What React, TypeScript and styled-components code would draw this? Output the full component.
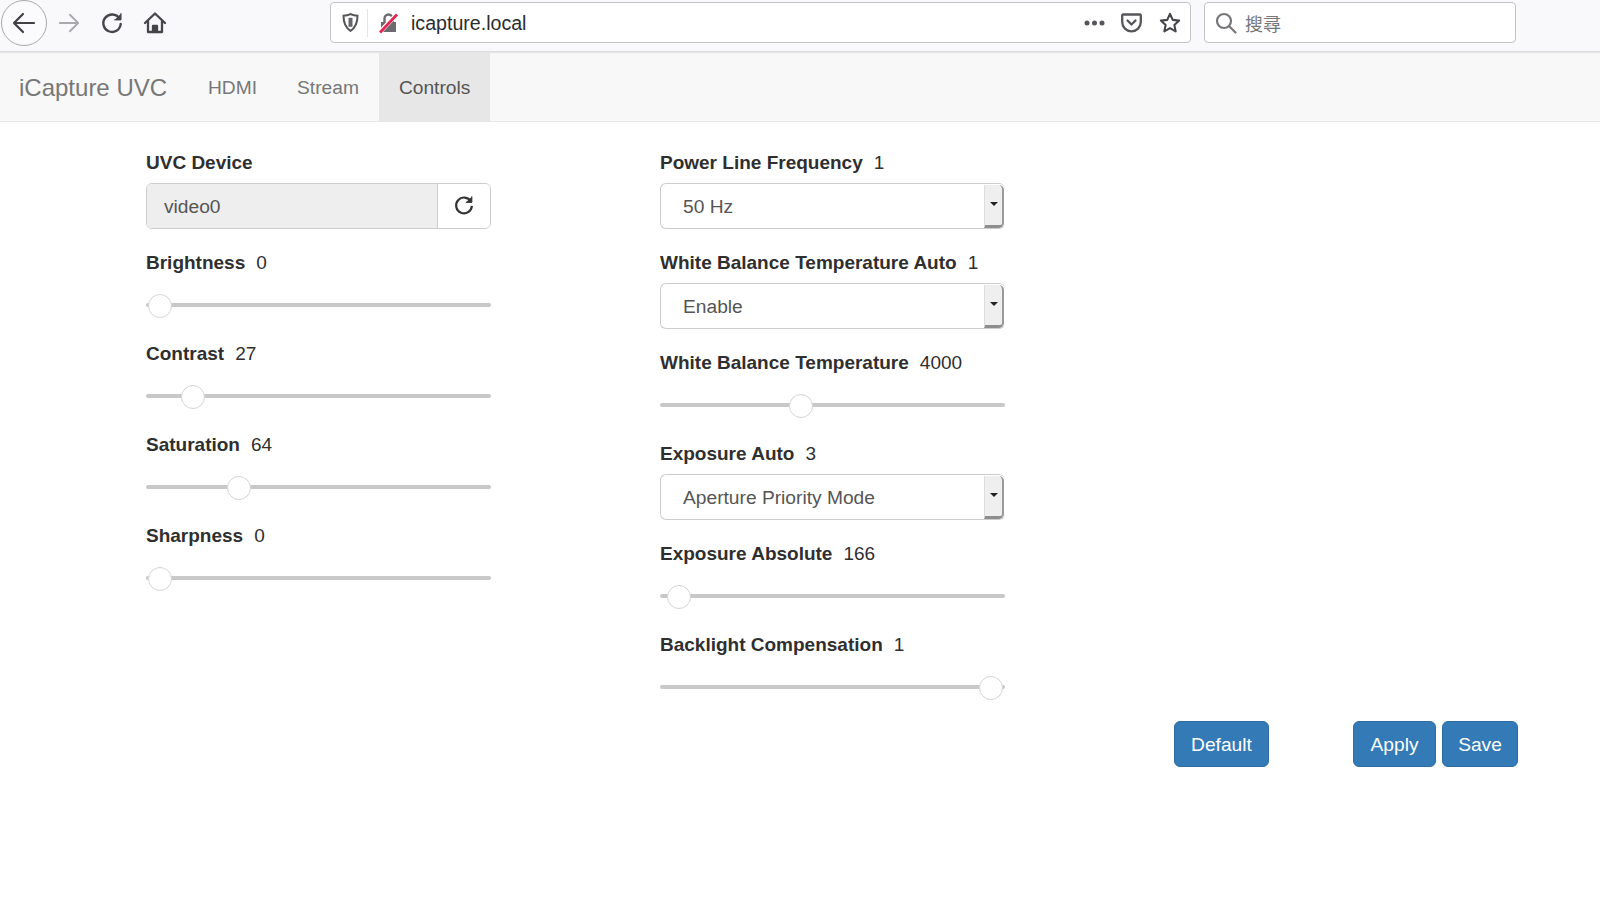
import React from "react";
import styled, { createGlobalStyle } from "styled-components";

const Global = createGlobalStyle`
  html, body { margin: 0; padding: 0; background: #fff; }
  body { font-family: "Liberation Sans", Arial, "Noto Sans CJK TC", sans-serif; color: #333; }
  * { box-sizing: border-box; }
`;

const Page = styled.div`
  width: 1600px;
  height: 912px;
  overflow: hidden;
  display: flex;
  flex-direction: column;
`;

const Toolbar = styled.header`
  height: 52px;
  flex: none;
  display: flex;
  align-items: center;
  padding: 0 0 6px 1px;
  background: #f9f9fb;
  border-bottom: 1px solid #dcdcdf;
  box-shadow: 0 1px 1px #e6e6e8;
  position: relative;
`;

const BackButton = styled.button`
  width: 46px;
  height: 46px;
  flex: none;
  padding: 0;
  border: 1px solid #a8a8ac;
  border-radius: 50%;
  background: #fbfbfd;
  display: flex;
  align-items: center;
  justify-content: center;
`;

const ToolIcon = styled.span<{ $w: number; $ml: number }>`
  width: ${(p) => p.$w}px;
  margin-left: ${(p) => p.$ml}px;
  flex: none;
  display: flex;
  align-items: center;
  justify-content: center;
`;

const UrlBox = styled.div`
  width: 861px;
  height: 41px;
  margin-left: 163px;
  flex: none;
  display: flex;
  align-items: center;
  padding: 0 9px 0 11px;
  background: #fff;
  border: 1px solid #c4c4c8;
  border-radius: 4px;
`;

const UrlDivider = styled.span`
  width: 1px;
  height: 28px;
  margin: 0 11px 0 8px;
  background: #e4e4e6;
`;

const UrlText = styled.span`
  margin-left: 12px;
  padding-top: 2px;
  flex: 1;
  font-size: 19.6px;
  color: #2c2c30;
`;

const UrlAction = styled.span<{ $ml: number }>`
  margin-left: ${(p) => p.$ml}px;
  display: flex;
  align-items: center;
`;

const SearchBox = styled.div`
  width: 312px;
  height: 41px;
  margin-left: 13px;
  flex: none;
  display: flex;
  align-items: center;
  padding-left: 10px;
  gap: 8px;
  background: #fff;
  border: 1px solid #c4c4c8;
  border-radius: 4px;
`;

const SearchText = styled.span`
  font-family: "Noto Sans CJK TC", sans-serif;
  font-size: 18px;
  color: #77777b;
`;

const Nav = styled.nav`
  height: 70px;
  flex: none;
  display: flex;
  align-items: stretch;
  background: #f8f8f8;
  border-bottom: 1px solid #e7e7e7;
`;

const Brand = styled.a`
  margin-left: 19px;
  width: 169px;
  padding-top: 2px;
  display: flex;
  align-items: center;
  font-size: 24px;
  color: #777;
`;

const Tab = styled.a<{ $active?: boolean }>`
  display: flex;
  align-items: center;
  padding: 2px 20px 0;
  font-size: 19.2px;
  color: ${(p) => (p.$active ? "#555" : "#777")};
  background: ${(p) => (p.$active ? "#e7e7e7" : "transparent")};
`;

const Content = styled.main`
  flex: 1;
  display: flex;
  align-items: flex-start;
  padding: 29px 0 0 146px;
`;

const Column = styled.section<{ $ml?: number }>`
  width: 345px;
  margin-left: ${(p) => p.$ml ?? 0}px;
  flex: none;
  display: flex;
  flex-direction: column;
`;

const Field = styled.div<{ $h: number }>`
  height: ${(p) => p.$h}px;
`;

const Label = styled.div`
  height: 23px;
  line-height: 23px;
  font-size: 19px;
  font-weight: 700;
  color: #2f2f2f;
  white-space: nowrap;
`;

const Value = styled.span`
  margin-left: 11px;
  font-weight: 400;
`;

const InputGroup = styled.div`
  margin-top: 9px;
  height: 46px;
  display: flex;
  border: 1px solid #ccc;
  border-radius: 6px;
  overflow: hidden;
`;

const ReadOnlyInput = styled.div`
  flex: 1;
  display: flex;
  align-items: center;
  padding: 1px 0 0 17px;
  font-size: 19.2px;
  color: #555;
  background: #eee;
  border-right: 1px solid #ccc;
`;

const AddonButton = styled.button`
  width: 52px;
  flex: none;
  padding: 0 0 2px;
  border: 0;
  background: #fff;
  display: flex;
  align-items: center;
  justify-content: center;
`;

const SelectBox = styled.div`
  margin-top: 9px;
  height: 46px;
  display: flex;
  align-items: stretch;
  background: #fff;
  border: 1px solid #ccc;
  border-right: 0;
  border-radius: 6px;
`;

const SelectText = styled.div`
  flex: 1;
  display: flex;
  align-items: center;
  padding: 1px 0 0 22px;
  font-size: 19.2px;
  color: #555;
`;

const SelectArrow = styled.div`
  width: 20px;
  flex: none;
  margin: 1px 1px 0 0;
  padding-bottom: 2px;
  display: flex;
  align-items: center;
  justify-content: center;
  background: #efefef;
  border-left: 1px solid #ddd;
  border-right: 2px solid #9a9a9a;
  border-bottom: 3px solid #8e8e8e;
  border-radius: 0 5px 5px 0;

  &::after {
    content: "";
    border-left: 4.500px solid transparent;
    border-right: 4.500px solid transparent;
    border-top: 4.500px solid #222;
  }
`;

const Track = styled.div`
  position: relative;
  margin-top: 29px;
  height: 4px;
  border-radius: 2px;
  background: #c8c8c8;
`;

const Thumb = styled.span`
  position: absolute;
  top: -9px;
  width: 24px;
  height: 24px;
  margin-left: -12px;
  border-radius: 50%;
  background: #fff;
  border: 1px solid #d4d4d4;
`;

const Actions = styled.div`
  margin-left: 169px;
  padding-top: 570px;
  display: flex;
  flex: none;
`;

const PrimaryButton = styled.button<{ $w: number; $ml?: number }>`
  width: ${(p) => p.$w}px;
  height: 46px;
  margin-left: ${(p) => p.$ml ?? 0}px;
  padding: 2px 0 0;
  font-family: inherit;
  font-size: 19.2px;
  color: #fff;
  background: #337ab7;
  border: 1px solid #2e6da4;
  border-radius: 6px;
`;

const Slider = ({ name, value, center }: { name: string; value: string; center: number }) => (
  <Field $h={91}>
    <Label>
      {name}
      <Value>{value}</Value>
    </Label>
    <Track>
      <Thumb style={{ left: center }} />
    </Track>
  </Field>
);

const Dropdown = ({ name, value, option }: { name: string; value: string; option: string }) => (
  <Field $h={100}>
    <Label>
      {name}
      <Value>{value}</Value>
    </Label>
    <SelectBox>
      <SelectText>{option}</SelectText>
      <SelectArrow />
    </SelectBox>
  </Field>
);

const Reload = ({ size, color }: { size: number; color: string }) => (
  <svg width={size} height={size} viewBox="0 0 24 24" fill="none" stroke={color} strokeWidth="2.4">
    <path d="M19.5 8.2A8.6 8.6 0 1 0 20.6 13" />
    <path d="M20.6 2.6v6.6H14" fill={color} strokeWidth="1" />
  </svg>
);

export default function App() {
  return (
    <Page>
      <Global />
      <Toolbar>
        <BackButton aria-label="back">
          <svg width="26" height="24" viewBox="0 0 26 24" fill="none" stroke="#3f3f44" strokeWidth="2.2" strokeLinecap="round" strokeLinejoin="round">
            <path d="M3 12h20M12 3l-9 9 9 9" />
          </svg>
        </BackButton>
        <ToolIcon $w={24} $ml={10}>
          <svg width="24" height="22" viewBox="0 0 26 24" fill="none" stroke="#a9a9ae" strokeWidth="2" strokeLinecap="round" strokeLinejoin="round">
            <path d="M3 12h20M14 3l9 9-9 9" />
          </svg>
        </ToolIcon>
        <ToolIcon $w={24} $ml={19}>
          <svg width="24" height="24" viewBox="0 0 24 24" fill="none" stroke="#45454a" strokeWidth="2.4" strokeLinecap="round">
            <path d="M19.4 7.6A8.7 8.7 0 1 0 20.7 13" />
            <path d="M21 2.5v6.4h-6.4" fill="#45454a" strokeWidth="1" strokeLinejoin="round" />
          </svg>
        </ToolIcon>
        <ToolIcon $w={24} $ml={19}>
          <svg width="24" height="24" viewBox="0 0 24 24" fill="none" stroke="#45454a" strokeWidth="2.3" strokeLinecap="round" strokeLinejoin="round">
            <path d="M2 12 12 2.500 22 12M5 10v11h14V10" />
            <path d="M10 21v-6h4v6" fill="#45454a" />
          </svg>
        </ToolIcon>
        <UrlBox>
          <svg width="17" height="19" viewBox="0 0 17 19" fill="none" stroke="#55555a" strokeWidth="2">
            <path d="M8.500 1.200c2.400 1.200 4.600 1.600 7 1.600 0 7-1.600 11.800-7 15-5.400-3.200-7-8-7-15 2.400 0 4.600-.4 7-1.600Z" />
            <path d="M8.500 4.800v9" strokeWidth="4" stroke="#66666a" />
          </svg>
          <UrlDivider />
          <svg width="20" height="22" viewBox="0 0 20 22">
            <path d="M2 10h15v10H2z" fill="#6c6c70" />
            <path d="M5.500 10V6.500a4 4 0 0 1 8 0V10" fill="none" stroke="#6c6c70" strokeWidth="2.400" />
            <path d="M1 20 18 2" stroke="#fff" strokeWidth="4.500" />
            <path d="M1 20.500 18 2.500" stroke="#e22850" strokeWidth="2.800" />
          </svg>
          <UrlText>icapture.local</UrlText>
          <UrlAction $ml={0}>
            <svg width="21" height="6" viewBox="0 0 21 6" fill="#55555a">
              <circle cx="3" cy="3" r="2.500" />
              <circle cx="10.500" cy="3" r="2.500" />
              <circle cx="18" cy="3" r="2.500" />
            </svg>
          </UrlAction>
          <UrlAction $ml={16}>
            <svg width="21" height="20" viewBox="0 0 21 20" fill="none" stroke="#55555a" strokeWidth="2.300" strokeLinecap="round" strokeLinejoin="round">
              <path d="M2 1.500h17a.8.800 0 0 1 .8.800V9a9.300 9.300 0 0 1-18.600 0V2.300a.8.800 0 0 1 .8-.800Z" />
              <path d="m6.500 7.500 4 4 4-4" />
            </svg>
          </UrlAction>
          <UrlAction $ml={17}>
            <svg width="22" height="21" viewBox="0 0 24 23" fill="none" stroke="#45454a" strokeWidth="2.300" strokeLinejoin="round">
              <path d="m12 2 3 6.600 7 .8-5.200 4.800 1.400 7L12 17.700l-6.200 3.500 1.400-7L2 9.400l7-.8Z" />
            </svg>
          </UrlAction>
        </UrlBox>
        <SearchBox>
          <svg width="22" height="22" viewBox="0 0 22 22" fill="none" stroke="#77777b" strokeWidth="2.200" strokeLinecap="round">
            <circle cx="9" cy="9" r="7" />
            <path d="m14.200 14.200 6.300 6.300" />
          </svg>
          <SearchText>搜尋</SearchText>
        </SearchBox>
      </Toolbar>
      <Nav>
        <Brand>iCapture UVC</Brand>
        <Tab>HDMI</Tab>
        <Tab>Stream</Tab>
        <Tab $active>Controls</Tab>
      </Nav>
      <Content>
        <Column>
          <Field $h={100}>
            <Label>UVC Device</Label>
            <InputGroup>
              <ReadOnlyInput>video0</ReadOnlyInput>
              <AddonButton aria-label="refresh">
                <Reload size={22} color="#333" />
              </AddonButton>
            </InputGroup>
          </Field>
          <Slider name="Brightness" value="0" center={14} />
          <Slider name="Contrast" value="27" center={47} />
          <Slider name="Saturation" value="64" center={93} />
          <Slider name="Sharpness" value="0" center={14} />
        </Column>
        <Column $ml={169}>
          <Dropdown name="Power Line Frequency" value="1" option="50 Hz" />
          <Dropdown name="White Balance Temperature Auto" value="1" option="Enable" />
          <Slider name="White Balance Temperature" value="4000" center={141} />
          <Dropdown name="Exposure Auto" value="3" option="Aperture Priority Mode" />
          <Slider name="Exposure Absolute" value="166" center={19} />
          <Slider name="Backlight Compensation" value="1" center={331} />
        </Column>
        <Actions>
          <PrimaryButton $w={95}>Default</PrimaryButton>
          <PrimaryButton $w={83} $ml={84}>Apply</PrimaryButton>
          <PrimaryButton $w={76} $ml={6}>Save</PrimaryButton>
        </Actions>
      </Content>
    </Page>
  );
}
